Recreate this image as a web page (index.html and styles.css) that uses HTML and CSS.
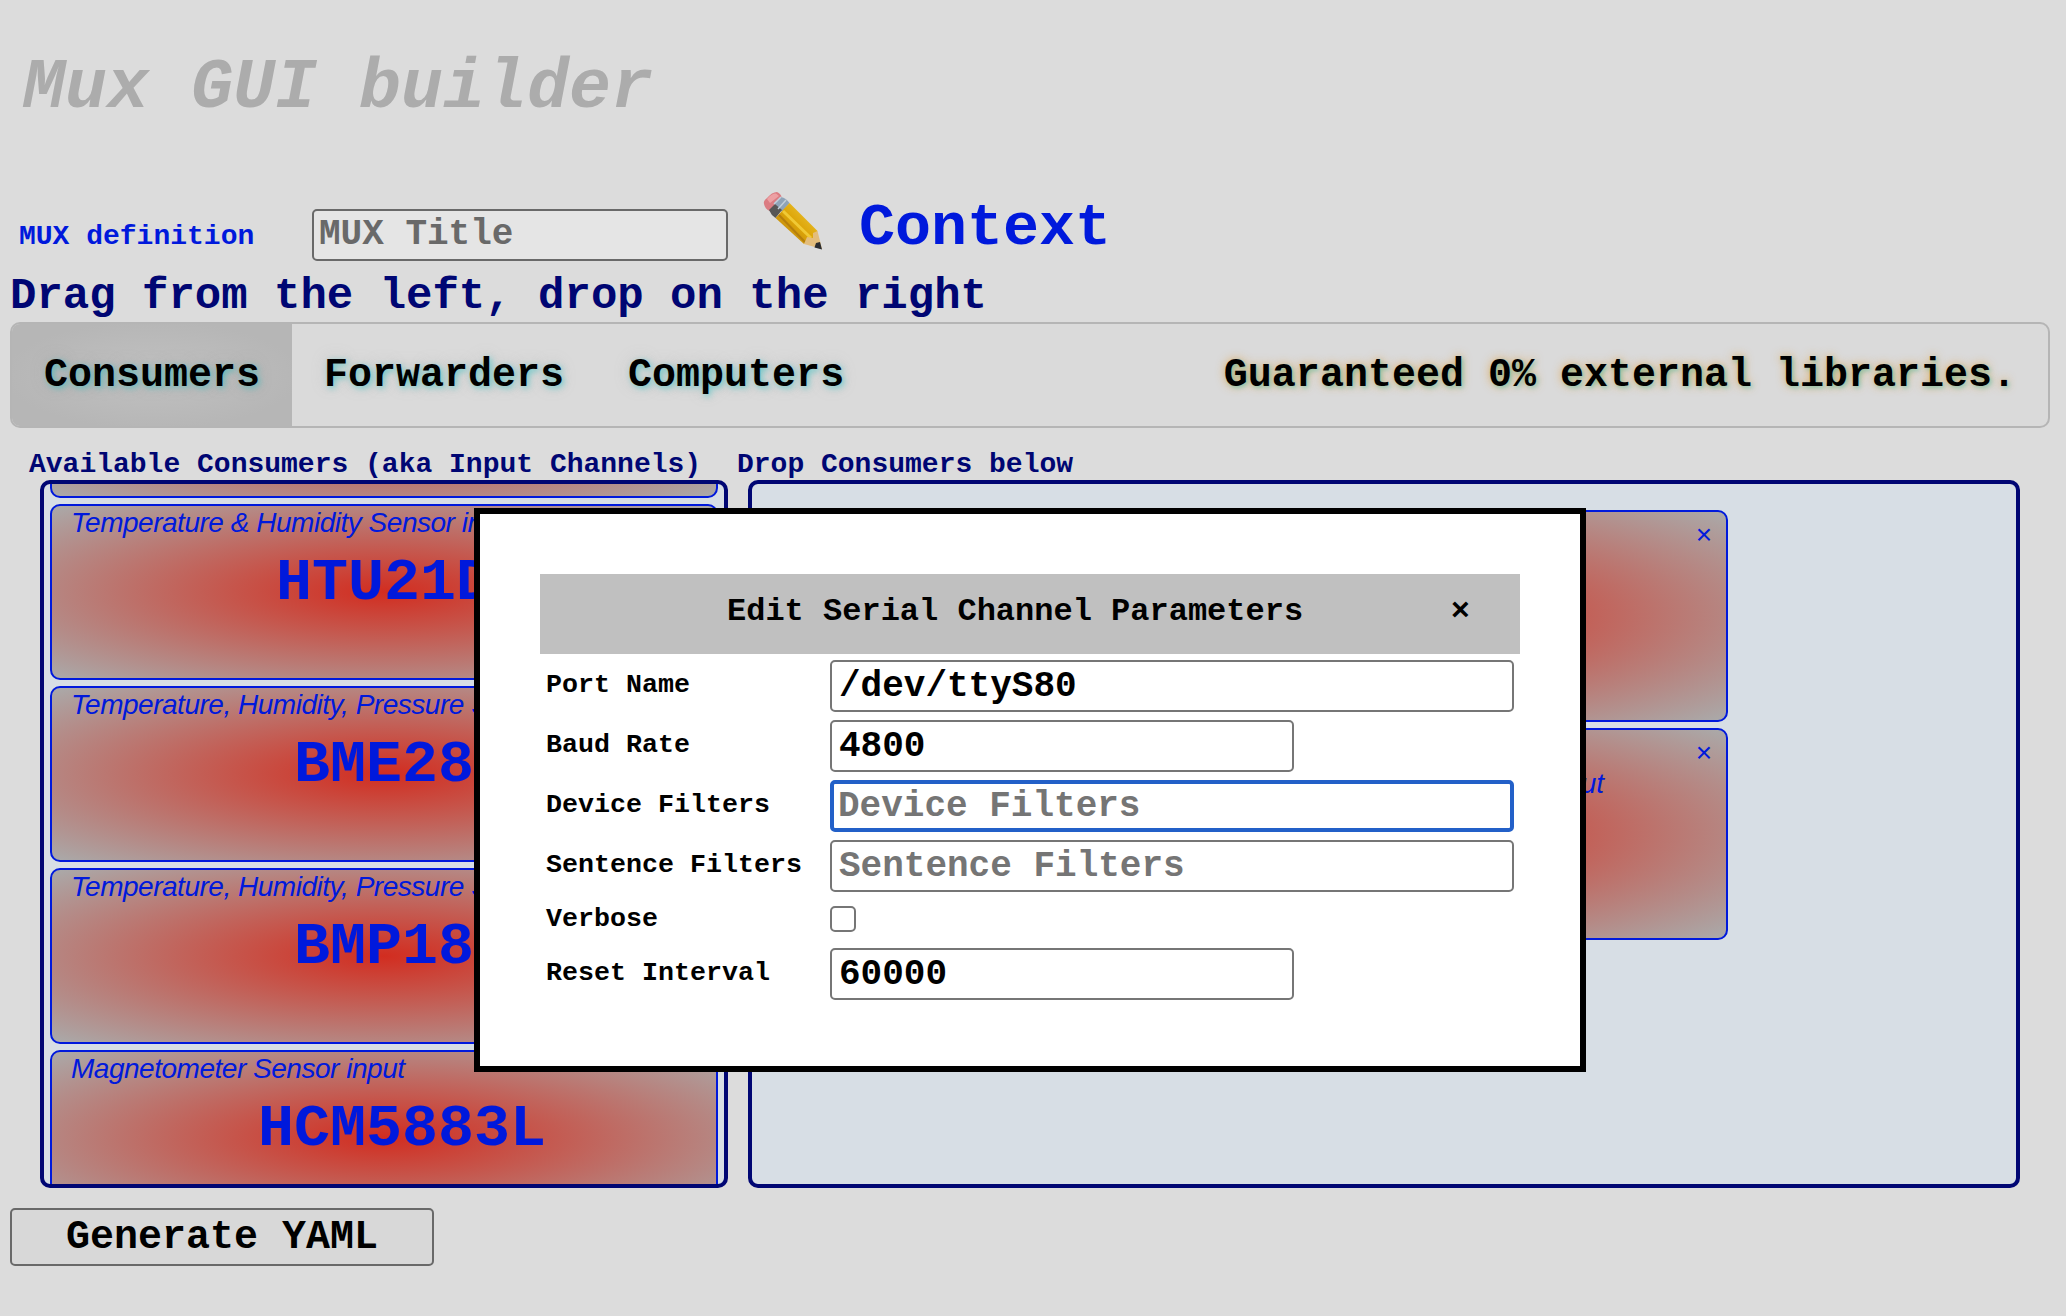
FILE: index.html
```html
<!DOCTYPE html>
<html lang="en">
<head>
<meta charset="utf-8">
<title>Mux GUI builder</title>
<link rel="stylesheet" href="styles.css">
</head>
<body>
<main class="page">
  <h1 class="title">Mux GUI builder</h1>

  <div class="definition">
    <span class="definition-label">MUX definition</span>
    <input class="field definition-input" type="text" placeholder="MUX Title">
    <svg class="pencil" viewBox="0 0 60 58" width="60" height="58" aria-hidden="true">
      <defs>
        <linearGradient id="wood" x1="0" y1="1" x2="1" y2="0">
          <stop offset="0.2" stop-color="#c08a10"/>
          <stop offset="0.5" stop-color="#dda508"/>
          <stop offset="0.8" stop-color="#e8bd2c"/>
        </linearGradient>
      </defs>
      <path d="M1 12 Q0 9 4 6 Q9 0 14 0 Q18 2 18.500 5 L6.500 19 Q2 17 1 12Z" fill="#db7c82"/>
      <path d="M4 7 Q9 1 13 1.500 L16 4 L7 11Z" fill="#eda0a3"/>
      <path d="M18 5 Q23 6 26.500 11 L19 20 L11 11Z" fill="#8fa3b8"/>
      <path d="M6 18 L12 12 L19 18 L12.500 26 Q8 23 6 18Z" fill="#565656"/>
      <path d="M11 12 L18 5 M15 17 L23 8" stroke="#c2cfda" stroke-width="1.500"/>
      <path d="M26.500 11 L54.500 39 L50 47 L41 52 L12.500 26Z" fill="url(#wood)"/>
      <path d="M20 19 L48 46" stroke="#f0c935" stroke-width="3"/>
      <path d="M16 23 L42 50" stroke="#b57e0c" stroke-width="2"/>
      <path d="M54.500 39 L59 57 L41 52 L44 45 L50 46 L50 41Z" fill="#e3bd7c"/>
      <path d="M57 50 L59 57.500 L51.500 55.500 L53 51Z" fill="#2b2d31"/>
    </svg>
    <span class="context">Context</span>
  </div>

  <h2 class="hint">Drag from the left, drop on the right</h2>

  <nav class="tabs">
    <a class="tab tab-active">Consumers</a>
    <a class="tab">Forwarders</a>
    <a class="tab">Computers</a>
    <span class="tab motto">Guaranteed 0% external libraries.</span>
  </nav>

  <div class="columns">
    <section class="source">
      <div class="column-label">Available Consumers (aka Input Channels)</div>
      <div class="bin source-bin">
        <article class="card"></article>
        <article class="card">
          <div class="card-kind">Temperature &amp; Humidity Sensor input</div>
          <div class="card-name">HTU21DF</div>
        </article>
        <article class="card">
          <div class="card-kind">Temperature, Humidity, Pressure Sensor input</div>
          <div class="card-name">BME280</div>
        </article>
        <article class="card">
          <div class="card-kind">Temperature, Humidity, Pressure Sensor input</div>
          <div class="card-name">BMP180</div>
        </article>
        <article class="card">
          <div class="card-kind">Magnetometer Sensor input</div>
          <div class="card-name">HCM5883L</div>
        </article>
      </div>
    </section>
    <section class="target">
      <div class="column-label">Drop Consumers below</div>
      <div class="bin target-bin">
        <article class="card dropped"><span class="remove">×</span></article>
        <article class="card dropped">
          <span class="remove">×</span>
          <div class="dropped-kind">input</div>
        </article>
      </div>
    </section>
  </div>

  <button class="generate" type="button">Generate YAML</button>
</main>

<div class="dialog" role="dialog">
  <header class="dialog-head">
    <span class="dialog-title">Edit Serial Channel Parameters</span>
    <span class="dialog-close">×</span>
  </header>
  <form class="form">
    <label class="row"><span>Port Name</span><input class="field" type="text" value="/dev/ttyS80"></label>
    <label class="row"><span>Baud Rate</span><input class="field short" type="text" value="4800"></label>
    <label class="row"><span>Device Filters</span><input class="field focused" type="text" placeholder="Device Filters"></label>
    <label class="row"><span>Sentence Filters</span><input class="field" type="text" placeholder="Sentence Filters"></label>
    <label class="row row-check"><span>Verbose</span><input class="check" type="checkbox"></label>
    <label class="row"><span>Reset Interval</span><input class="field short" type="text" value="60000"></label>
  </form>
</div>
</body>
</html>
```
FILE: styles.css
```css
* {
  box-sizing: border-box;
}

body {
  margin: 0;
  height: 1316px;
  overflow: hidden;
  position: relative;
  background: #dcdcdc;
  color: #000;
  font-family: "Courier New", "Liberation Mono", monospace;
  font-weight: bold;
}

.page {
  display: flex;
  flex-direction: column;
  padding: 49px 16px 0 10px;
}

.title {
  margin: 0 0 63px 13px;
  font-size: 70px;
  line-height: 80px;
  font-style: italic;
  color: #acacac;
}

.definition {
  display: flex;
  align-items: baseline;
  height: 68px;
  padding-left: 9px;
  color: #0019dc;
}

.definition-label {
  width: 293px;
  font-size: 28px;
  line-height: 28px;
}

.field {
  display: block;
  width: 684px;
  height: 52px;
  margin: 0;
  padding: 0 7px;
  border: 2px solid #767676;
  border-radius: 5px;
  outline: 0;
  background: #fff;
  color: #000;
  font: bold 36px "Courier New", "Liberation Mono", monospace;
}

.field::placeholder {
  color: #757575;
}

.short {
  width: 464px;
}

.definition-input {
  width: 416px;
  padding: 0 5px;
  border-color: #696969;
  background: #e5e5e5;
}

.definition-input::placeholder {
  color: #696969;
}

.pencil {
  align-self: flex-start;
  margin: 0 36px 0 35px;
}

.context {
  margin-top: 6px;
  font-size: 60px;
  line-height: 60px;
}

.hint {
  margin: 11px 0 1px;
  font-size: 44px;
  line-height: 50px;
  color: #000673;
}

.tabs {
  display: flex;
  height: 106px;
  border: 2px solid #b5b5b5;
  border-radius: 10px;
  overflow: hidden;
  background: #dadada;
}

.tab {
  padding: 0 32px;
  font-size: 40px;
  line-height: 103px;
  text-shadow: 2px 2px 6px rgba(0, 190, 190, 0.5), 0 0 16px rgba(150, 150, 150, 0.25);
}

.tab-active {
  background: radial-gradient(#c1c1c1, #b6b6b6 75%);
}

.motto {
  margin-left: auto;
  text-shadow: 2px 2px 4px rgba(0, 190, 170, 0.35), 0 0 10px rgba(230, 150, 40, 0.7);
}

.columns {
  display: flex;
  gap: 10px;
  margin: 22px 30px 20px 20px;
}

.source {
  width: 698px;
}

.target {
  flex: 1;
}

.column-label {
  margin-left: -1px;
  font-size: 28px;
  line-height: 30px;
  color: #000673;
}

.bin {
  display: flex;
  flex-direction: column;
  gap: 6px;
  height: 708px;
  margin-left: 10px;
  border: 4px solid #000673;
  border-radius: 10px;
  overflow: hidden;
  background: #d7dee5;
}

.source-bin {
  padding: 0 6px;
}

.target-bin {
  align-items: center;
  padding-top: 26px;
}

.card {
  flex: none;
  height: 176px;
  border: 2px solid #0019dc;
  border-radius: 10px;
  background: radial-gradient(#d22d20, #c6554b 32%, #aaaaaa);
  color: #0019dc;
}

.source-bin .card:first-child {
  margin-top: -162px;
}

.card-kind,
.dropped-kind,
.remove {
  font: normal 28px/34px Helvetica, "Liberation Sans", sans-serif;
}

.card-kind {
  padding-left: 19px;
  font-style: italic;
  letter-spacing: -0.48px;
  white-space: nowrap;
}

.card-name {
  margin-top: 9px;
  padding-left: 36px;
  font-size: 60px;
  line-height: 68px;
  text-align: center;
}

.dropped {
  display: flex;
  flex-direction: column;
  width: 688px;
  height: 212px;
  padding-top: 6px;
}

.remove {
  align-self: flex-end;
  height: 32px;
  margin-right: 14px;
}

.dropped-kind {
  padding: 0 122px 0 0;
  font-style: italic;
  line-height: 32px;
  text-align: right;
}

.generate {
  align-self: flex-start;
  width: 424px;
  height: 58px;
  padding: 1px 0 0;
  border: 2px solid #696969;
  border-radius: 5px;
  background: #d8d8d8;
  color: #000;
  font: bold 40px "Courier New", "Liberation Mono", monospace;
}

.dialog {
  position: absolute;
  left: 474px;
  top: 508px;
  width: 1112px;
  height: 564px;
  padding: 60px;
  border: 6px solid #000;
  background: #fff;
}

.dialog-head {
  display: flex;
  justify-content: space-between;
  height: 80px;
  padding: 0 50px 0 187px;
  background: #c0c0c0;
  font-size: 32px;
  line-height: 76px;
}

.form {
  display: flex;
  flex-direction: column;
  gap: 8px;
  padding: 6px 6px 0;
}

.row {
  display: flex;
  align-items: flex-start;
  height: 52px;
  font-size: 26.67px;
}

.row span {
  width: 284px;
  padding-top: 10px;
  line-height: 30px;
}

.focused {
  border: 4px solid #2360c8;
  padding: 0 4px;
}

.row-check {
  height: 40px;
}

.row-check span {
  padding-top: 4px;
}

.check {
  width: 26px;
  height: 26px;
  margin: 6px 0 0;
  appearance: none;
  border: 2px solid #767676;
  border-radius: 5px;
  background: #fff;
}
```
